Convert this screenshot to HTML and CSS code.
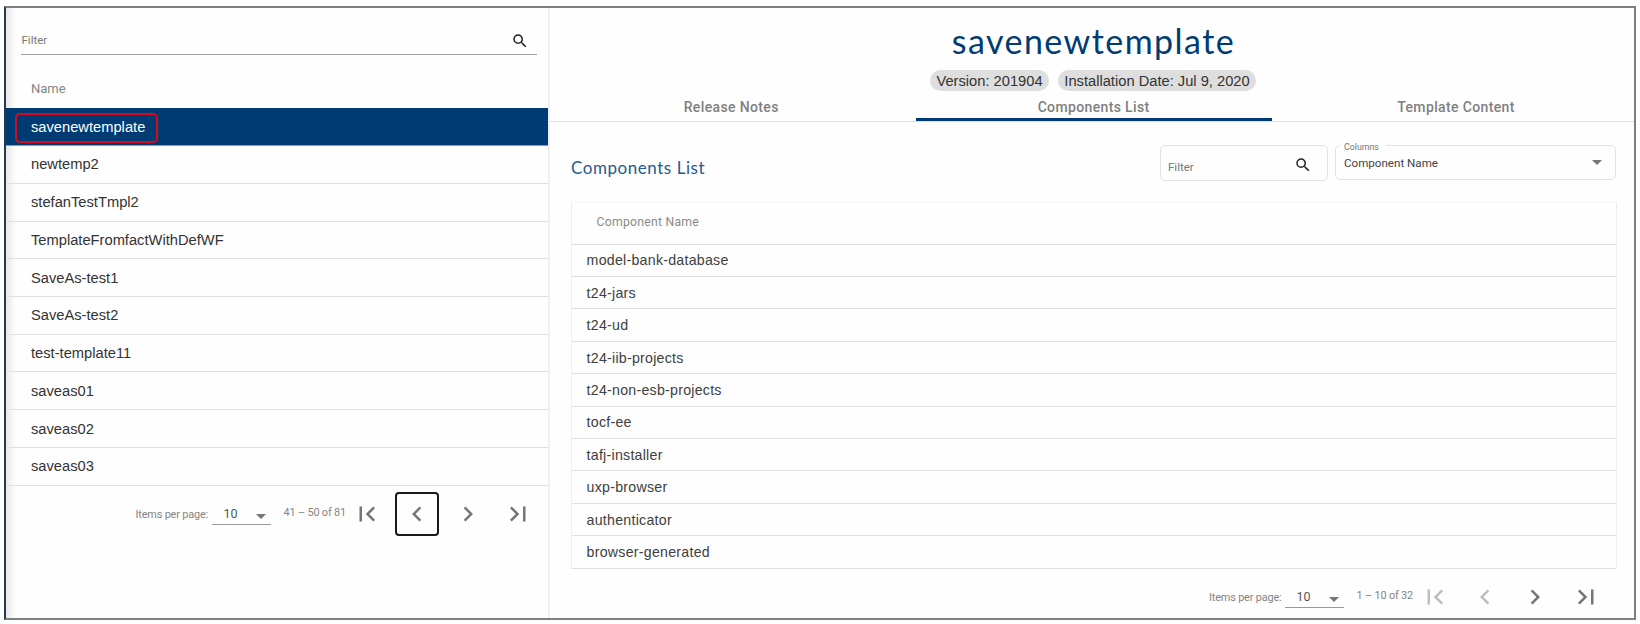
FILE: index.html
```html
<!DOCTYPE html>
<html lang="en">
<head>
<meta charset="utf-8">
<title>Templates</title>
<link rel="stylesheet" href="styles.css">
</head>
<body>
<svg class="defs" width="0" height="0">
  <symbol id="search" viewBox="0 0 24 24"><path d="M15.5 14h-.79l-.28-.27A6.471 6.471 0 0 0 16 9.5 6.5 6.5 0 1 0 9.5 16c1.61 0 3.09-.59 4.23-1.57l.27.28v.79l5 4.99L20.49 19l-4.99-5zm-6 0C7.01 14 5 11.99 5 9.5S7.01 5 9.5 5 14 7.01 14 9.5 11.99 14 9.5 14z"/></symbol>
  <symbol id="first" viewBox="0 0 24 24"><path d="M18.41 16.59L13.82 12l4.59-4.59L17 6l-6 6 6 6zM6 6h2v12H6z"/></symbol>
  <symbol id="prev" viewBox="0 0 24 24"><path d="M15.41 7.41L14 6l-6 6 6 6 1.41-1.41L10.83 12z"/></symbol>
  <symbol id="next" viewBox="0 0 24 24"><path d="M10 6L8.59 7.41 13.17 12l-4.58 4.59L10 18l6-6z"/></symbol>
  <symbol id="last" viewBox="0 0 24 24"><path d="M5.59 7.41L10.18 12l-4.59 4.59L7 18l6-6-6-6zM16 6h2v12h-2z"/></symbol>
</svg>
<div class="frame">
  <aside class="side">
    <div class="side-filter"><span>Filter</span><svg class="search"><use href="#search"/></svg></div>
    <div class="side-head"><span>Name</span></div>
    <ul class="side-list">
      <li class="selected"><span class="label">savenewtemplate</span></li>
      <li>newtemp2</li>
      <li>stefanTestTmpl2</li>
      <li>TemplateFromfactWithDefWF</li>
      <li>SaveAs-test1</li>
      <li>SaveAs-test2</li>
      <li>test-template11</li>
      <li>saveas01</li>
      <li>saveas02</li>
      <li>saveas03</li>
    </ul>
    <div class="pager">
      <span class="per-page">Items per page:</span>
      <div class="size"><span>10</span><i class="caret"></i></div>
      <span class="range">41 – 50 of 81</span>
      <div class="nav">
        <button><svg><use href="#first"/></svg></button>
        <button class="focused"><svg><use href="#prev"/></svg></button>
        <button><svg><use href="#next"/></svg></button>
        <button><svg><use href="#last"/></svg></button>
      </div>
    </div>
  </aside>
  <main class="main">
    <h1>savenewtemplate</h1>
    <div class="chips"><span class="chip version">Version: 201904</span><span class="chip date">Installation Date: Jul 9, 2020</span></div>
    <nav class="tabs">
      <a>Release Notes</a>
      <a class="active">Components List</a>
      <a>Template Content</a>
    </nav>
    <div class="toolbar">
      <h2>Components List</h2>
      <div class="filter-box"><span>Filter</span><svg class="search"><use href="#search"/></svg></div>
      <div class="columns-box"><span class="legend">Columns</span><span class="value">Component Name</span><i class="caret"></i></div>
    </div>
    <div class="table">
      <div class="thead"><span>Component Name</span></div>
      <div class="row">model-bank-database</div>
      <div class="row">t24-jars</div>
      <div class="row">t24-ud</div>
      <div class="row">t24-iib-projects</div>
      <div class="row">t24-non-esb-projects</div>
      <div class="row">tocf-ee</div>
      <div class="row">tafj-installer</div>
      <div class="row">uxp-browser</div>
      <div class="row">authenticator</div>
      <div class="row">browser-generated</div>
    </div>
    <div class="pager pager-main">
      <span class="per-page">Items per page:</span>
      <div class="size"><span>10</span><i class="caret"></i></div>
      <span class="range">1 – 10 of 32</span>
      <div class="nav">
        <button disabled><svg><use href="#first"/></svg></button>
        <button disabled><svg><use href="#prev"/></svg></button>
        <button><svg><use href="#next"/></svg></button>
        <button><svg><use href="#last"/></svg></button>
      </div>
    </div>
  </main>
</div>
</body>
</html>
```

FILE: styles.css
```css
*, *::after { box-sizing: border-box; }
body { margin: 0; width: 1640px; height: 624px; overflow: hidden; background: #fff; font-family: Roboto, sans-serif; color: #333; }
.defs { display: block; height: 0; }
svg { display: block; fill: currentColor; flex: none; }
h1, h2, ul { margin: 0; padding: 0; font-weight: 400; }

.frame { display: flex; width: 1632px; height: 614px; margin: 6px 0 0 4px; border: 2px solid #7f7f7f; border-left: 2px solid #223c50; background: #fefefe; }

.side { width: 544px; flex: none; border-right: 2px solid #f0f0f2; background: linear-gradient(90deg, #e8e8e8, #fefefe 10px); }
.side-filter { display: flex; align-items: center; justify-content: space-between; width: 516px; height: 47px; margin-left: 15px; padding: 17px 8px 0 0; border-bottom: 1px solid #a3a3a3; font-size: 11.5px; color: #777; }
.side-filter span { padding-left: .5px; }
.search { width: 18px; height: 18px; color: #222; }
.side-filter .search { position: relative; top: 1px; }
.side-head { height: 53.4px; padding: 26px 0 0 25px; font-size: 13px; line-height: 15px; color: #858585; }
.side-list { list-style: none; }
.side-list li { display: flex; align-items: center; height: 37.72px; padding: 0 0 0 25px; border-bottom: 1px solid #e0e0e0; font: 14.7px "Liberation Sans", Arial, sans-serif; color: #333; }
.side-list .selected { background: #003c73; border-color: #7f9db9; color: #fff; }
.side-list .label { position: relative; }
.side-list .label::after { content: ""; position: absolute; left: -16px; top: -6px; width: 143px; height: 30px; border: 2px solid #d80a1c; border-radius: 5px; }

.pager { display: flex; align-items: center; height: 57px; font-size: 10.9px; letter-spacing: -.17px; color: #858585; }
.side .pager { padding-left: 129.5px; }
.per-page { width: 76px; white-space: nowrap; }
.size { display: flex; align-items: center; justify-content: space-between; width: 59px; height: 21px; padding: 0 4.5px 1px 12px; border-bottom: 1px solid #999; font-size: 12.5px; letter-spacing: 0; color: #555; }
.caret { width: 0; height: 0; border: 5px solid transparent; border-top-color: #757575; border-bottom: 0; }
.size .caret { margin-top: 7px; }
.range { width: 74.5px; padding: 0 0 3px 13px; white-space: nowrap; }
.nav { display: flex; gap: 6.4px; }
.nav button { display: grid; place-items: center; width: 44px; height: 44px; padding: 0; border: 0; background: none; color: #757575; }
.nav button:disabled { color: #bdbdbd; }
.nav .focused { border: 2px solid #1a1a1a; border-radius: 4px; }
.nav svg { width: 30px; height: 30px; }
.side .nav { position: relative; top: -.5px; }

.main { flex: 1; min-width: 0; }
h1 { height: 62px; padding-top: 13px; padding-left: 3px; text-align: center; font: 34px/40px Lato, sans-serif; color: #003c73; letter-spacing: 1.45px; }
.chips { display: flex; justify-content: center; gap: 9px; padding-left: 2px; }
.chip { height: 21px; border-radius: 11px; background: #dedede; text-align: center; font: 14.7px/22px "Liberation Sans", Arial, sans-serif; color: #333; white-space: nowrap; }
.version { width: 119px; }
.date { width: 198px; }
.tabs { display: grid; grid-template-columns: repeat(3, 362.4px); height: 31px; border-bottom: 1px solid #dedede; overflow: hidden; }
.tabs a { margin: 0 3.2px; padding-top: 8px; text-align: center; font-size: 14px; line-height: 17px; font-weight: 500; letter-spacing: .36px; color: #808080; }
.tabs .active { border-bottom: 3px solid #003c73; }

.toolbar { display: flex; align-items: flex-start; height: 79.6px; padding: 23px 0 0 21px; }
h2 { width: 589px; padding-top: 13px; font: 17px/20px Lato, sans-serif; color: #255a8d; letter-spacing: .55px; }
.filter-box { display: flex; align-items: center; justify-content: space-between; width: 168px; height: 36px; padding: 2px 15px 0 7px; border: 1px solid #e2e2e2; border-radius: 5px; font-size: 11.5px; color: #777; }
.filter-box span { padding-top: 5px; }
.filter-box .search { position: relative; top: 1px; }
.columns-box { position: relative; display: flex; align-items: center; justify-content: space-between; width: 281px; height: 35px; margin-left: 7px; padding: 0 13px 0 8px; border: 1px solid #e2e2e2; border-radius: 5px; font-size: 11.6px; color: #444; }
.legend { position: absolute; left: 4px; top: -4px; padding: 0 7px 0 4px; background: #fefefe; font-size: 8.8px; line-height: 11px; color: #777; }

.table { width: 1046px; margin-left: 20.6px; border: 1px solid #ededed; border-top-color: #f7f7f7; border-bottom: 0; }
.thead { height: 42px; padding: 12px 0 0 25px; border-bottom: 1px solid #e0e0e0; font-size: 12.2px; line-height: 15px; letter-spacing: .26px; color: #8a8a8a; }
.row { display: flex; align-items: center; height: 32.42px; padding-left: 15px; border-bottom: 1px solid #e0e0e0; font: 14.2px "Liberation Sans", Arial, sans-serif; letter-spacing: .25px; color: #404040; }
.pager-main { padding-left: 659px; }
.pager-main .per-page { width: 75.5px; }
.pager-main .range { width: 69px; }
```
